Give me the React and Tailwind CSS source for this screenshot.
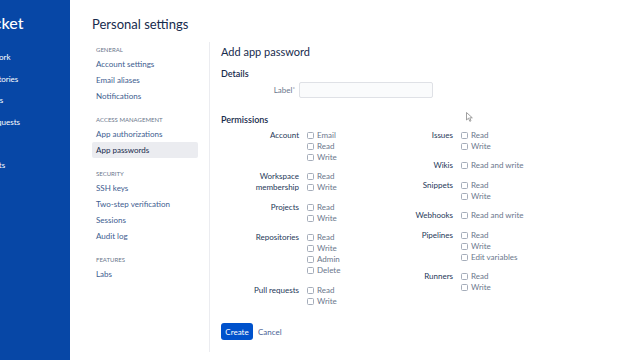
import React from 'react'

const navSections = [
    { title: 'GENERAL', items: ['Account settings', 'Email aliases', 'Notifications'] },
    { title: 'ACCESS MANAGEMENT', items: ['App authorizations', 'App passwords'] },
    { title: 'SECURITY', items: ['SSH keys', 'Two-step verification', 'Sessions', 'Audit log'] },
    { title: 'FEATURES', items: ['Labs'] },
]

const leftPerms = [
    { label: ['Account'], options: ['Email', 'Read', 'Write'] },
    { label: ['Workspace', 'membership'], options: ['Read', 'Write'] },
    { label: ['Projects'], options: ['Read', 'Write'] },
    { label: ['Repositories'], options: ['Read', 'Write', 'Admin', 'Delete'] },
    { label: ['Pull requests'], options: ['Read', 'Write'] },
]

const rightPerms = [
    { label: ['Issues'], options: ['Read', 'Write'] },
    { label: ['Wikis'], options: ['Read and write'] },
    { label: ['Snippets'], options: ['Read', 'Write'] },
    { label: ['Webhooks'], options: ['Read and write'] },
    { label: ['Pipelines'], options: ['Read', 'Write', 'Edit variables'] },
    { label: ['Runners'], options: ['Read', 'Write'] },
]

const PermGroup = ({ group, labelWidth, last }) => (
    <div className={last ? 'flex' : 'flex mb-[8.5px]'}>
        <div className={`${labelWidth} text-right text-[8px] leading-[11px] text-[#253858]`}>
            {group.label.map((l) => (
                <div key={l}>{l}</div>
            ))}
        </div>
        <div className="ml-[8px]">
            {group.options.map((o) => (
                <label key={o} className="flex items-center gap-[3px] h-[11px] text-[8px] leading-[11px] text-[#6b778c]">
                    <span className="w-[7px] h-[7px] border border-[#a5adba] rounded-[1.5px] bg-white shrink-0"></span>
                    <span>{o}</span>
                </label>
            ))}
        </div>
    </div>
)

const App = () => {
    return (
        <div className="flex w-[640px] h-[360px] overflow-hidden bg-white font-['Lato',sans-serif] relative">
            {/* Product sidebar (cut off) */}
            <aside className="w-[70px] shrink-0 bg-[#0747a6] overflow-hidden text-white pt-[13px]">
                <div className="ml-[-44px] text-[16px] leading-[20px] font-medium whitespace-nowrap">Bitbucket</div>
                <div className="mt-[14px] ml-[-25px] text-[8px] whitespace-nowrap">
                    <div className="h-[21.5px] leading-[21.5px]">Your work</div>
                    <div className="h-[21.5px] leading-[21.5px]">Repositories</div>
                    <div className="h-[21.5px] leading-[21.5px]">Projects</div>
                    <div className="h-[21.5px] leading-[21.5px]">Pull requests</div>
                    <div className="h-[21.5px]"></div>
                    <div className="h-[21.5px] leading-[21.5px]">Snippets</div>
                </div>
            </aside>

            <main className="flex-1 pl-[22px] pt-[14px]">
                <h1 className="text-[13px] leading-[20px] text-[#172b4d]">Personal settings</h1>

                <div className="flex mt-[8px] h-[310px]">
                    {/* Settings nav */}
                    <nav className="w-[117px] pt-[2px]">
                        {navSections.map((s, i) => (
                            <div key={s.title} className={i > 0 ? 'mt-[10px]' : ''}>
                                <div className="pl-[4px] h-[12px] leading-[12px] text-[6px] text-[#6b778c]">{s.title}</div>
                                {s.items.map((item) => (
                                    <div
                                        key={item}
                                        className={
                                            item === 'App passwords'
                                                ? 'w-[106px] h-[16px] leading-[16px] pl-[4px] text-[8px] rounded-[2px] bg-[#ebecf0] text-[#172b4d]'
                                                : 'w-[106px] h-[16px] leading-[16px] pl-[4px] text-[8px] text-[#405d8f]'
                                        }
                                    >
                                        {item}
                                    </div>
                                ))}
                            </div>
                        ))}
                    </nav>

                    {/* Content */}
                    <section className="flex-1 border-l border-[#ebecf0] pl-[11px] pt-[2px]">
                        <h2 className="text-[11px] leading-[16px] text-[#172b4d]">Add app password</h2>
                        <h3 className="mt-[8px] text-[9px] leading-[12px] font-semibold text-[#172b4d]">Details</h3>
                        <div className="mt-[2px] flex items-center">
                            <div className="w-[74px] text-right text-[8px] text-[#6b778c]">
                                Label<span className="text-[6px] align-top">*</span>
                            </div>
                            <div className="ml-[4px] w-[134px] h-[16px] border border-[#dfe1e6] bg-[#fafbfc] rounded-[2px]"></div>
                        </div>

                        <h3 className="mt-[16px] text-[9px] leading-[12px] font-semibold text-[#172b4d]">Permissions</h3>
                        <div className="mt-[3.5px] flex">
                            <div className="w-[174px]">
                                {leftPerms.map((g, i) => (
                                    <PermGroup key={g.label[0]} group={g} labelWidth="w-[78px]" last={i === leftPerms.length - 1} />
                                ))}
                            </div>
                            <div>
                                {rightPerms.map((g, i) => (
                                    <PermGroup key={g.label[0]} group={g} labelWidth="w-[58px]" last={i === rightPerms.length - 1} />
                                ))}
                            </div>
                        </div>

                        <div className="mt-[16.5px] flex items-center">
                            <button className="w-[32px] h-[17px] rounded-[3px] bg-[#0052cc] text-white text-[8px]">Create</button>
                            <button className="ml-[5px] text-[8px] text-[#4a6396]">Cancel</button>
                        </div>
                    </section>
                </div>
            </main>

            {/* mouse cursor */}
            <svg className="absolute left-[466px] top-[112px]" width="7" height="10" viewBox="0 0 7 10">
                <path d="M0.5 0.5 L0.5 8 L2.5 6.2 L3.8 9.3 L5 8.8 L3.8 5.8 L6.3 5.8 Z" fill="#fff" stroke="#888" strokeWidth="0.8" />
            </svg>
        </div>
    )
}

export default App
